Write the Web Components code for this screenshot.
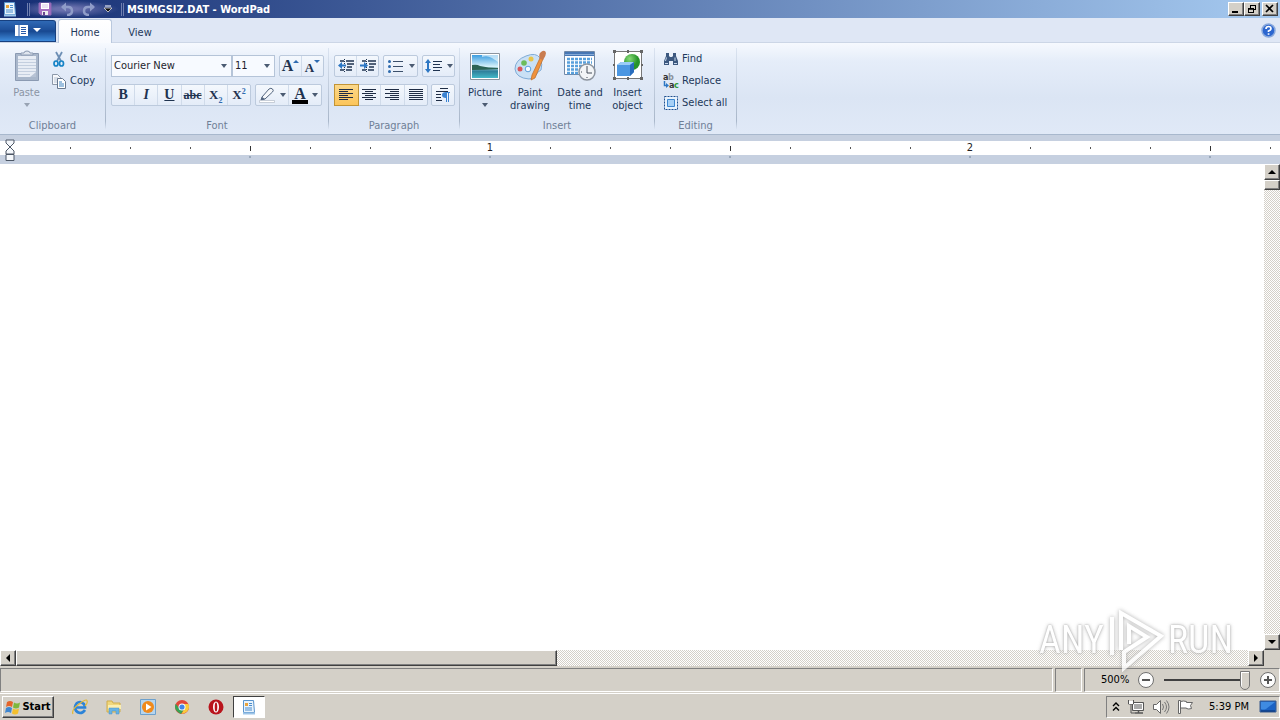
<!DOCTYPE html>
<html lang="en">
<head>
<meta charset="utf-8">
<title>MSIMGSIZ.DAT - WordPad</title>
<style>
html, body { height: 100%; margin: 0; }
body { font: 11px/14px "DejaVu Sans Condensed", "Noto Sans", sans-serif; color: #1e395b; background: #d4d0c8; overflow: hidden; }
</style>
</head>
<body>
<wp-app></wp-app>
<script>
const A = 'fill="none" stroke-linecap="round"';
const ICONS = {
  doc: [16, 16, `<path d="M2.500 1.500h10l1 12h-11z" fill="#e8f3fc" stroke="#5a94cc"/><path d="M4 4h3v3H4z" fill="#e9a33c"/><path d="M8 4.500h3M8 6.500h3M4 9h7M4 11h7" stroke="#4a8ccc"/><path d="M2 14.500h12" stroke="#9cc4e8" stroke-width="2"/>`],
  save: [14, 14, `<path d="M1 1h12v12H3l-2-2z" fill="#a56fc0" stroke="#8f68b4"/><path d="M3 1h8v6H3z" fill="#fff"/><path d="M4 3h6M4 5h6" stroke="#d8c8e8"/><path d="M4 9h6v4H4z" fill="#eee"/><path d="M5 10h2v3H5z" fill="#6b4590"/>`],
  undo: [14, 14, `<path d="M2 5h6q4 0 4 4t-5 4" fill="none" stroke="#8f9cc8" stroke-width="2.500"/><path d="M1 5l5-4.500v9z" fill="#8f9cc8"/>`],
  redo: [14, 14, `<path d="M12 5H6Q2 5 2 9t5 4" fill="none" stroke="#8f9cc8" stroke-width="2.500"/><path d="M13 5L8 .500v9z" fill="#8f9cc8"/>`],
  qat: [8, 8, `<path d="M1 1h6" stroke="#fff"/><path d="M0 3h8L4 7z" fill="#111" stroke="#ddd" stroke-width=".8"/>`],
  file: [28, 14, `<path d="M1 1h13v11H1z" fill="#fff"/><path d="M5 1v11" stroke="#2a5caa"/><path d="M7 3.500h5M7 5.500h5M7 7.500h5M7 9.500h5" stroke="#2a5caa"/><path d="M19 4h8l-4 4z" fill="#fff"/>`],
  help: [15, 15, `<circle cx="7.500" cy="7.500" r="6.500" fill="#2c66cf" stroke="#8aa9dc" stroke-width="1.500"/><path d="M5 6q0-2.500 2.500-2.500T10 5.700Q10 7 7.500 8v1" fill="none" stroke="#fff" stroke-width="1.700"/><path d="M6.700 10.300h1.700v1.500H6.700z" fill="#fff"/>`],
  min: [12, 10, `<path d="M2 8h6" stroke="#000" stroke-width="2"/>`],
  restore: [12, 10, `<path d="M4 1.500h6M4.500 1v3M9.500 1v5M7 5.500h3M2 5h6M2.500 4v5M7.500 4v5M2 8.500h6" stroke="#000"/><path d="M4 1h6v1H4zM2 4h6v1.500H2z"/>`],
  close: [12, 10, `<path d="M2 1l7 7M9 1L2 8" stroke="#000" stroke-width="1.700"/>`],
  paste: [26, 32, `<path d="M1.500 3.500h23v27h-23z" fill="#a9b7cb" stroke="#8b9ab2"/><path d="M4 6h18v21H4z" fill="#e8edf5"/><path d="M4 9.500h18M4 12.500h18M4 15.500h18M4 18.500h18M4 21.500h18M4 24.500h12" stroke="#c4cfdf"/><path d="M7 5V3h3q0-2 3-2t3 2h3v2z" fill="#dfe5ee" stroke="#8b9ab2"/><path d="M22 22v5h-6z" fill="#b7c3d5"/>`],
  cut: [16, 16, `<path d="M5 1l5 9M11 1L6 10" stroke="#6d8fb5" stroke-width="1.800"/><ellipse cx="5" cy="12.500" rx="2" ry="2.500" ${A} stroke="#1583c6" stroke-width="1.700"/><ellipse cx="10.500" cy="12.500" rx="2" ry="2.500" ${A} stroke="#1583c6" stroke-width="1.700"/>`],
  copy: [16, 16, `<path d="M1.500 1.500h5l3 3v7h-8z" fill="#f6f8fb" stroke="#8c98a9"/><path d="M3 5h4M3 7h4M3 9h4" stroke="#b9c5d5"/><path d="M6.500 5.500h5l3 3v7h-8z" fill="#fff" stroke="#68788e"/><path d="M8 9h3M8 11h5M8 13h5" stroke="#3f83c0"/>`],
  caret: [6, 4, `<path d="M0 0h6L3 4z" fill="#4b5b72"/>`],
  caretoff: [6, 4, `<path d="M0 0h6L3 4z" fill="#98a3b3"/>`],
  up: [6, 14, `<path d="M0 4l3-3 3 3z" fill="#2f6bb0"/>`],
  down: [6, 14, `<path d="M0 1h6L3 4z" fill="#2f6bb0"/>`],
  pen: [18, 18, `<path d="M4 11l7-8q2-1.500 3.500 0t0 3L7 13l-4 1z" fill="#f5f7fa" stroke="#52647e"/><path d="M4 11l3 2-4 1z" fill="#52647e"/><path d="M1.500 14.500h15v2h-15z" fill="#fff" stroke="#b5bdc8" stroke-width=".7"/>`],
  outdent: [18, 16, `<path d="M3 3h4M9 3h8M10 6h7M10 9h5M3 12h4M9 12h6" stroke="#1f3350" stroke-width="1.500"/><path d="M7.500 1v14" stroke="#1f3350" stroke-dasharray="1 1"/><path d="M1 7.500l4-3.500v2.500h4v2H5V11z" fill="#2d77c4"/>`],
  indent: [18, 16, `<path d="M3 3h4M9 3h8M10 6h7M10 9h5M3 12h4M9 12h6" stroke="#1f3350" stroke-width="1.500"/><path d="M7.500 1v14" stroke="#1f3350" stroke-dasharray="1 1"/><path d="M9 7.500L5 4v2.500H1v2h4V11z" fill="#2d77c4"/>`],
  bullets: [18, 16, `<path d="M6 3.500h10M6 8.500h10M6 13.500h10" stroke="#3b4f6b"/><circle cx="2.500" cy="3.500" r="1.500" fill="#2d6aad"/><circle cx="2.500" cy="8.500" r="1.500" fill="#2d6aad"/><circle cx="2.500" cy="13.500" r="1.500" fill="#2d6aad"/>`],
  spacing: [18, 16, `<path d="M8 3.500h9M8 6.500h7M8 9.500h9M8 12.500h7" stroke="#1f3350" stroke-width="1.200"/><path d="M0 5l3-4 3 4H4v6h2l-3 4-3-4h2V5z" fill="#2d77c4"/>`],
  left: [16, 14, `<path d="M1 1.500h14M1 3.500h9M1 5.500h14M1 7.500h9M1 9.500h14M1 11.500h9" stroke="#1f2d45"/>`],
  center: [16, 14, `<path d="M1 1.500h14M4 3.500h8M1 5.500h14M4 7.500h8M1 9.500h14M4 11.500h8" stroke="#1f2d45"/>`],
  right: [16, 14, `<path d="M1 1.500h14M6 3.500h9M1 5.500h14M6 7.500h9M1 9.500h14M6 11.500h9" stroke="#1f2d45"/>`],
  justify: [16, 14, `<path d="M1 1.500h14M1 3.500h14M1 5.500h14M1 7.500h14M1 9.500h14M1 11.500h14" stroke="#1f2d45"/>`],
  para: [16, 16, `<path d="M5 1.500h8M1 4.500h12M1 7.500h5M1 10.500h5M1 13.500h6" stroke="#1f2d45"/><path d="M11 5h4v1h-1v9h-1V6h-1v9h-1v-4Q7 11 7 8t4-3z" fill="#3b83d2"/>`],
  picture: [32, 32, `<defs><linearGradient id="s" x2="0" y2="1"><stop offset="0" stop-color="#3c9de0"/><stop offset=".5" stop-color="#d5f1fa"/><stop offset=".7" stop-color="#2f7f9a"/><stop offset="1" stop-color="#43b8c8"/></linearGradient></defs><path d="M1.500 3.500h29v26h-29z" fill="#fff" stroke="#8b949f"/><path d="M3 5h26v23H3z" fill="url(#s)"/><path d="M3 15q5-1 8 1 8 2 18 2v1q-14 1-26 1z" fill="#2b6456"/><path d="M13 7q5-2 10 1t6 4V5H13z" fill="#e8f7fd" opacity=".7"/>`],
  paint: [32, 32, `<path d="M12 6Q22 2 26 8q3 7 1 12-4 2-5 5-2 4-7 4Q2 28 1 19 1 10 12 6z" fill="#c9e0f5" stroke="#7fabd6"/><circle cx="10" cy="13" r="2.800" fill="#6cbc5a"/><circle cx="17" cy="9" r="2.500" fill="#e9c548"/><circle cx="6" cy="19" r="2.500" fill="#d9575c"/><circle cx="14" cy="19" r="2.800" fill="#f7fbff" stroke="#5c9fdc"/><path d="M26 8l3 1-8 19-4 2 1-5z" fill="#f0923c" stroke="#b96a2a" stroke-width=".7"/><path d="M26 9q-2-5 1-7 4-3 5 1 0 3-3 7z" fill="#c97c50"/>`],
  date: [32, 32, `<path d="M.500 1.500h30v23H.500z" fill="#fff" stroke="#7189a8"/><path d="M1 2h29v4H1z" fill="#4777b4"/><path d="M1 4.500h29" stroke="#86aad6"/><path d="M3 9h25M3 12.500h25M3 16h25M3 19.500h15M3 23h13" stroke="#58a0dc" stroke-width="2.500" stroke-dasharray="3 1"/><circle cx="23" cy="22" r="8" fill="#f3f5f7" stroke="#8c949e" stroke-width="1.500"/><path d="M23 16v7h5" fill="none" stroke="#444c58"/><path d="M23 28v-1M17 22h1" stroke="#444c58"/>`],
  object: [32, 32, `<path d="M2.500 1.500h27v27h-27z" fill="#fff" stroke="#777"/><defs><radialGradient id="g" cx=".35" cy=".3"><stop offset="0" stop-color="#8bdc7a"/><stop offset="1" stop-color="#26942a"/></radialGradient></defs><circle cx="20" cy="12" r="8" fill="url(#g)"/><path d="M5 15l4-3h13v10l-4 4H5z" fill="#4c97e2"/><path d="M5 15l4-3h13l-4 3z" fill="#9accf7"/><path d="M18 15l4-3v10l-4 4z" fill="#2a6dbd"/><path d="M1 0h3v3H1zM28 0h3v3h-3zM1 27h3v3H1zM28 27h3v3h-3zM15 0h2v3h-2zM15 27h2v3h-2zM1 14h2v2H1zM29 14h2v2h-2z" fill="#666"/>`],
  find: [16, 16, `<path d="M3 2h3v3l1 1h2l1-1V2h3v3l2 5v4h-5v-4H6v4H1v-4l2-5z" fill="#3c587f"/><path d="M3.500 6.500L2.500 10M12 6.500v3.500M2 12.500h3M11 12.500h3" stroke="#c7d7ec"/>`],
  replace: [16, 16, `<path d="M1.500 8v4.500H4" fill="none" stroke="#2d77c4" stroke-width="1.500"/><path d="M3 10l3 2.500L3 15z" fill="#2d77c4"/><text x="0" y="7" font-size="9" font-weight="700" fill="#333">a</text><text x="5" y="7" font-size="9" font-weight="700" fill="#8a929c">b</text><text x="6" y="15" font-size="9" font-weight="700" fill="#333">a</text><text x="11" y="15" font-size="9" font-weight="700" fill="#2e9a3b">c</text>`],
  selall: [16, 16, `<path d="M1.500 1.500h13v13h-13z" fill="#e9f3fd" stroke="#1f4f8f" stroke-dasharray="2 1"/><path d="M4.500 4.500h7v7h-7z" fill="#a7d0f6" stroke="#3d86cf"/>`],
  indentmark: [11, 23, `<path d="M1 1h8v3L5 8 1 4zM5 8l4 4v3H1v-3zM1 15.500h8v6H1z" fill="#f5f8fc" stroke="#4c5766"/>`],
  aup: [8, 8, `<path d="M0 6l4-4 4 4z"/>`], adown: [8, 8, `<path d="M0 2h8L4 6z"/>`],
  aleft: [8, 8, `<path d="M6 0v8L2 4z"/>`], aright: [8, 8, `<path d="M2 0v8l4-4z"/>`],
  minus: [18, 18, `<circle cx="9" cy="9" r="7.500" fill="#fcfcfc" stroke="#6f6f6f"/><path d="M5 9h8" stroke="#555" stroke-width="2"/>`],
  plus: [18, 18, `<circle cx="9" cy="9" r="7.500" fill="#fcfcfc" stroke="#6f6f6f"/><path d="M5 9h8M9 5v8" stroke="#555" stroke-width="2"/>`],
  flag: [16, 16, `<path d="M2 3q3-2 6 0l-1 5q-3-2-6 0z" fill="#e5642a"/><path d="M9 3.500q3 2 6 0l-1 5q-3 2-6 0z" fill="#7eb83c"/><path d="M1 9q3-2 6 0l-1 5q-3-2-6 0z" fill="#3f86d0"/><path d="M8 9.500q3 2 6 0l-1 5q-3 2-6 0z" fill="#f4bf2c"/>`],
  ie: [16, 16, `<path d="M13 11q-2 3-5 3-5-1-5-6 1-5 5-5 5 1 5 5.500H4" fill="none" stroke="#2b83d8" stroke-width="2.700"/><path d="M1 15Q-1 11 7 5t8-3q1 2-2 5" fill="none" stroke="#e3b938" stroke-width="1.200"/>`],
  folder: [16, 16, `<path d="M1 2h5l1 2h7v9H1z" fill="#f0d77c" stroke="#d0ad4c"/><path d="M2 6h13v4H2z" fill="#fbeeb0"/><path d="M3 15V9h10v6h-3v-3H6v3z" fill="#67b3e4" stroke="#4a93c8" stroke-width=".5"/>`],
  media: [16, 16, `<path d="M.500.500h15v15H.500z" fill="#b6d5ee" stroke="#6da0cc"/><circle cx="8" cy="8" r="6" fill="#f08a1c"/><path d="M6 4.500v7L11.500 8z" fill="#fff"/>`],
  chrome: [16, 16, `<circle cx="8" cy="8" r="7" fill="#e2473a"/><path d="M1.700 4.700Q-1 11 7 15l4-6-6 0z" fill="#37a355"/><path d="M14.500 5Q17 13 7.500 15L11 8.500 10 5z" fill="#f9cb3c"/><circle cx="8" cy="8" r="3.500" fill="#fff"/><circle cx="8" cy="8" r="2.600" fill="#4285e8"/>`],
  opera: [16, 16, `<circle cx="8" cy="8" r="7.500" fill="#b9141c"/><ellipse cx="8" cy="8" rx="3" ry="5.500" fill="#fff"/><ellipse cx="8" cy="8" rx="1.300" ry="4.500" fill="#b9141c"/>`],
  chev: [8, 12, `<path d="M1 5l3-3 3 3M1 9.500l3-3 3 3" fill="none" stroke="#000" stroke-width="1.400"/>`],
  net: [18, 16, `<path d="M5.500 3.500h11v8h-11z" fill="#aaa" stroke="#555"/><path d="M6.500 4.500h9v6h-9z" fill="none" stroke="#fff"/><path d="M8 14h8M11.500 12v2" stroke="#555" stroke-width="1.500"/><path d="M1.500 1v4h5V1M4 5v9h4" fill="none" stroke="#555"/><path d="M2 2h4v3H2z" fill="#fff"/>`],
  vol: [18, 16, `<path d="M1.500 5.500h3l4-4v13l-4-4h-3z" fill="#fff" stroke="#666"/><path d="M10.500 5q2 3 0 6M12.500 3q4 5 0 10M14.500 1.500q5 6.500 0 13" fill="none" stroke="#777"/>`],
  tflag: [18, 16, `<path d="M1.500 1.500h2v13h-2z" fill="#fff" stroke="#666"/><path d="M3.500 2.500q3-1 6 0v1h6l-2 3 1 3q-3 1-5 0V9h-6z" fill="#fff" stroke="#666"/>`],
  desk: [18, 14, `<path d="M1 1h16v11H1z" fill="#1b62c4" stroke="#3a5b8c"/><path d="M2 2h14L7 9q-3 1-5 0z" fill="#3f8be2"/><path d="M2 11h14" stroke="#0b2f6b"/>`]
};
const define = (tag, css, html, setup) => customElements.define(tag, class extends HTMLElement {
  connectedCallback() {
    if (this.shadowRoot) return;
    const root = this.attachShadow({ mode: 'open' });
    root.innerHTML = `<style>*{box-sizing:border-box}${css}</style>` + (typeof html === 'function' ? html(this) : html);
    if (setup) setup(this, root);
  }
});
const bevel = 'background:#d4d0c8;border:1px solid;border-color:#fff #404040 #404040 #fff;box-shadow:inset -1px -1px #808080;';
const attr = (el, n, d = '') => el.getAttribute(n) ?? d;

define('wp-icon', ':host{display:block;flex:none} svg{display:block} text{font-family:"DejaVu Sans Condensed",sans-serif}', el => {
  const [w, h, body] = ICONS[attr(el, 'name')];
  return `<svg width="${w}" height="${h}" viewBox="0 0 ${w} ${h}" aria-hidden="true">${body}</svg>`;
});

define('wp-classic-button', `:host{display:flex;flex:none;width:16px;height:16px}
  button{${bevel}flex:1;display:flex;align-items:center;justify-content:center;padding:0;font:inherit;color:#000;gap:1px;min-width:0}
  :host([pressed]) button{background:#fff;border-color:#404040 #fff #fff #404040;box-shadow:none}`,
  el => `<button type="button" aria-label="${attr(el, 'label')}"><slot></slot></button>`);

define('wp-title-bar', `:host{display:flex;height:18px;align-items:center;background:linear-gradient(90deg,#142d73,#a6caf0);color:#fff;padding:0 2px;}
  .quick{display:flex;align-items:center;gap:8px;height:18px;padding:0 9px 0 8px;
    background:radial-gradient(ellipse at 40% 50%,#6970ad 15%,#6970ad00 68%)}
  .bar{width:3px;height:13px;border:solid #6f7fb0;border-width:0 1px;margin-left:9px} .bar.end{margin:0 3px 0 0}
  .quick button{all:unset;display:flex}
  h1{font:inherit;font-weight:700;line-height:16px;padding-top:2px;margin:0;flex:1;white-space:nowrap}
  .window{display:flex} wp-classic-button{width:16px;height:14px} wp-classic-button:last-child{margin-left:2px}`,
  `<wp-icon name="doc"></wp-icon><span class="bar"></span>
  <div class="quick"><button aria-label="Save"><wp-icon name="save"></wp-icon></button><button aria-label="Undo"><wp-icon name="undo"></wp-icon></button><button aria-label="Redo"><wp-icon name="redo"></wp-icon></button><button aria-label="Customize"><wp-icon name="qat"></wp-icon></button></div><span class="bar end"></span>
  <h1>MSIMGSIZ.DAT - WordPad</h1>
  <div class="window"><wp-classic-button label="Minimize"><wp-icon name="min"></wp-icon></wp-classic-button><wp-classic-button label="Restore"><wp-icon name="restore"></wp-icon></wp-classic-button><wp-classic-button label="Close"><wp-icon name="close"></wp-icon></wp-classic-button></div>`);

define('wp-tabs', `:host{display:flex;height:25px;background:#dfe7f5;align-items:stretch;border-bottom:1px solid #ccd6e6;padding-right:4px}
  button{font:inherit;color:inherit;border:0;background:none;padding:0;display:flex;align-items:center;justify-content:center}
  .file{width:56px;margin:2px 2px 0 0;height:22px;border:1px solid #17407f;border-left:0;border-radius:0 3px 0 0;background:linear-gradient(#2f69b5,#1d4f99 45%,#17478f 50%,#3f8bdb)}
  .tab{width:56px;height:25px;padding-top:4px}
  .on{width:54px;margin-top:1px;padding-top:1px;background:linear-gradient(#fff,#f8fafe);border:1px solid #b9c8de;border-bottom:0;border-radius:3px 3px 0 0}
  .help{margin:0 0 0 auto}`,
  `<button class="file" aria-label="WordPad menu"><wp-icon name="file"></wp-icon></button><button class="tab on">Home</button><button class="tab">View</button><button class="help" aria-label="Help"><wp-icon name="help"></wp-icon></button>`);

define('wp-group', `:host{display:flex;flex:none;flex-direction:column;border-right:1px solid;border-image:linear-gradient(#dbe4f1,#a9b7ca 85%,transparent 95%) 1;}
  .body{flex:1;display:flex;padding:0 5px} .name{height:14px;text-align:center;color:#6f7f96}`,
  el => `<div class="body"><slot></slot></div><div class="name">${attr(el, 'label')}</div>`);

define('wp-big', `:host{display:flex;flex:none}
  button{all:unset;width:100%;display:flex;flex-direction:column;align-items:center;text-align:center;line-height:13px}
  .pic{height:36px;display:flex;align-items:center;margin-bottom:2px} .caret{margin-top:4px} :host([disabled]) button{color:#8b95a5}`,
  el => `<button type="button"><span class="pic"><wp-icon name="${attr(el, 'icon')}"></wp-icon></span><slot></slot>${el.hasAttribute('caret') ? `<wp-icon class="caret" name="${el.hasAttribute('disabled') ? 'caretoff' : 'caret'}"></wp-icon>` : ''}</button>`);

define('wp-row', `:host{display:flex;height:22px} button{all:unset;display:flex;align-items:center;gap:3px;white-space:nowrap}`,
  el => `<button type="button"><wp-icon name="${attr(el, 'icon')}"></wp-icon><slot></slot></button>`);

define('wp-box', `:host{display:flex;flex:none;height:22px;border:1px solid #bccadd;border-radius:2px;background:linear-gradient(#f4f8fd,#e4ecf8)}`, '<slot></slot>');

define('wp-tool', `:host{display:flex;flex:1}
  :host(:not(:last-child)){border-right:1px solid #d0dbea}
  button{all:unset;flex:1;display:flex;align-items:center;justify-content:center;gap:4px;color:#1f3350;font:bold 14px/18px "Liberation Serif",serif;white-space:nowrap}
  :host([on]){margin:-1px;border:1px solid #c29436!important;background:linear-gradient(#fbd88b,#fcc55a)}`,
  el => `<button type="button" aria-label="${attr(el, 'label')}"><slot></slot>${attr(el, 'icon') ? `<wp-icon name="${attr(el, 'icon')}"></wp-icon>` : ''}${el.hasAttribute('caret') ? '<wp-icon name="caret"></wp-icon>' : ''}</button>`);

define('wp-select', `:host{display:grid;align-items:center;flex:none;height:22px;border:1px solid #b5c4d8;background:#f7faff}
  select,wp-icon{grid-area:1/1} select{appearance:none;border:0;margin:0;padding:0 2px;width:100%;height:20px;background:none;font:inherit;color:#1e1e2e}
  wp-icon{justify-self:end;margin-right:4px;pointer-events:none}`,
  el => `<select aria-label="${attr(el, 'label')}"><option>${attr(el, 'value')}</option></select><wp-icon name="caret"></wp-icon>`);

define('wp-ribbon', `:host{display:flex;height:92px;padding:5px 0 1px;border-bottom:1px solid #a8b8cd;background:linear-gradient(#f6f9fe,#e5edf9 20%,#dbe5f4 60%,#e0e9f7)}
  .clip{width:106px}.font{width:223px}.par{width:131px}.ins{width:195px}.edit{width:82px}
  .col{display:flex;flex-direction:column} .lines{display:flex;flex-direction:column;gap:7px;padding-top:7px} .line{display:flex;gap:4px}
  .paste{width:43px}.side{padding-left:3px}
  .fam{width:121px}.size{width:43px;margin-left:-4px}.grow{width:45px}.style{width:140px}.color{width:67px}
  .dent{width:45px}.list{width:35px}.sp{width:33px}.al{width:94px}.pm{width:24px;margin-left:-1px}
  .w40{width:40px}.w45{width:45px}.w50{width:50px}.editcol{padding-left:3px}
  i.f{font-style:italic}u{text-decoration:underline}s{font:bold 12px "Liberation Serif",serif} .x{font:bold 13px/14px "Liberation Serif",serif} .x sub,.x sup{font-size:8px;line-height:0;color:#2f6bb0}
  .lg{font-size:16px;margin-right:-4px}.sm{font-size:13px;margin-right:-4px;padding-top:3px}
  .ink{border-bottom:4px solid #000;line-height:13px;padding:0 2px;font-size:16px}`,
  `<wp-group class="clip" label="Clipboard"><wp-big class="paste" icon="paste" caret disabled>Paste</wp-big><div class="col side"><wp-row icon="cut">Cut</wp-row><wp-row icon="copy">Copy</wp-row></div></wp-group>
  <wp-group class="font" label="Font"><div class="lines"><div class="line"><wp-select class="fam" label="Font family" value="Courier New"></wp-select><wp-select class="size" label="Font size" value="11"></wp-select><wp-box class="grow"><wp-tool label="Grow font" icon="up"><span class="lg">A</span></wp-tool><wp-tool label="Shrink font" icon="down"><span class="sm">A</span></wp-tool></wp-box></div>
  <div class="line"><wp-box class="style"><wp-tool label="Bold">B</wp-tool><wp-tool label="Italic"><i class="f">I</i></wp-tool><wp-tool label="Underline"><u>U</u></wp-tool><wp-tool label="Strikethrough"><s>abc</s></wp-tool><wp-tool label="Subscript"><span class="x">X<sub>2</sub></span></wp-tool><wp-tool label="Superscript"><span class="x">X<sup>2</sup></span></wp-tool></wp-box>
  <wp-box class="color"><wp-tool label="Highlight" icon="pen" caret></wp-tool><wp-tool label="Text color" caret><span class="ink">A</span></wp-tool></wp-box></div></div></wp-group>
  <wp-group class="par" label="Paragraph"><div class="lines"><div class="line"><wp-box class="dent"><wp-tool label="Decrease indent" icon="outdent"></wp-tool><wp-tool label="Increase indent" icon="indent"></wp-tool></wp-box><wp-box class="list"><wp-tool label="List" icon="bullets" caret></wp-tool></wp-box><wp-box class="sp"><wp-tool label="Line spacing" icon="spacing" caret></wp-tool></wp-box></div>
  <div class="line"><wp-box class="al"><wp-tool label="Align left" icon="left" on></wp-tool><wp-tool label="Center" icon="center"></wp-tool><wp-tool label="Align right" icon="right"></wp-tool><wp-tool label="Justify" icon="justify"></wp-tool></wp-box><wp-box class="pm"><wp-tool label="Paragraph" icon="para"></wp-tool></wp-box></div></div></wp-group>
  <wp-group class="ins" label="Insert"><wp-big class="w40" icon="picture" caret>Picture</wp-big><wp-big class="w50" icon="paint">Paint<br>drawing</wp-big><wp-big class="w50" icon="date">Date and<br>time</wp-big><wp-big class="w45" icon="object">Insert<br>object</wp-big></wp-group>
  <wp-group class="edit" label="Editing"><div class="col editcol"><wp-row icon="find">Find</wp-row><wp-row icon="replace">Replace</wp-row><wp-row icon="selall">Select all</wp-row></div></wp-group>`);

define('wp-ruler', `:host{display:grid;height:29px;background:#c6d0e0;overflow:hidden}
  .band,.mark{grid-area:1/1} .band{min-width:0;margin-top:6px;display:flex;height:23px;padding-left:40px;background:linear-gradient(#fff 14px,transparent 14px);overflow:hidden}
  .cell{flex:none;width:60px;height:20px;display:flex;flex-direction:column;align-items:center;color:#222;line-height:14px}
  .num{height:15px} .dot{width:1px;height:2px;margin:6px 0 7px;background:#555} .half{width:1px;height:5px;margin:5px 0;background:#333}
  .foot{width:2px;height:2px;background:#9aa8ba} .mark{margin:4px 0 0 5px;z-index:1}`,
  '<div class="band"></div><wp-icon class="mark" name="indentmark"></wp-icon>',
  (el, root) => {
    const draw = () => {
      let cells = '';
      const count = Math.ceil((innerWidth - 40) / 60);
      for (let i = 1; i <= count; i++) cells += `<div class="cell">${i % 8 === 0 ? `<span class="num">${i / 8}</span><i class="foot"></i>` : i % 4 === 0 ? '<i class="half"></i><i class="foot"></i>' : '<i class="dot"></i>'}</div>`;
      root.querySelector('.band').innerHTML = cells;
    };
    draw();
    addEventListener('resize', draw);
  });

define('wp-scroll', `:host{display:flex;background:repeating-conic-gradient(#fff 0 25%,#d4d0c8 0 50%) 0 0/2px 2px}
  :host([dir=v]){flex-direction:column;width:16px} :host([dir=h]){height:16px}
  .thumb{${bevel}} :host([dir=v]) .thumb{flex:none;height:10px} :host([dir=v]) .rest{flex:1}
  :host([dir=h]) .thumb{flex:540} :host([dir=h]) .rest{flex:692}`,
  el => { const v = attr(el, 'dir') === 'v'; return `<wp-classic-button label="${v ? 'Up' : 'Left'}"><wp-icon name="${v ? 'aup' : 'aleft'}"></wp-icon></wp-classic-button><div class="thumb"></div><div class="rest"></div><wp-classic-button label="${v ? 'Down' : 'Right'}"><wp-icon name="${v ? 'adown' : 'aright'}"></wp-icon></wp-classic-button>`; });

define('wp-document', `:host{display:grid;grid-template:minmax(0,1fr) 16px/minmax(0,1fr) 16px;position:relative;background:#d4d0c8}
  textarea{border:0;margin:0;padding:4px 10px;resize:none;outline:0;width:100%;height:100%;background:#fff;font:73px "Liberation Mono",monospace}`,
  `<textarea aria-label="Document"></textarea><wp-scroll dir="v"></wp-scroll><wp-scroll dir="h"></wp-scroll>`);

define('wp-status', `:host{display:flex;gap:2px;height:27px;padding:2px 0 1px;background:#d4d0c8;color:#000}
  div{border:1px solid;border-color:#808080 #fff #fff #808080} .main{flex:1}.mid{width:27px}
  .zoom{width:196px;display:flex;align-items:center;padding:0 2px 0 16px;gap:6px}
  button{all:unset;display:flex} output{width:30px}
  input{appearance:none;flex:1;min-width:0;margin:0 3px;height:20px;background:linear-gradient(#404040,#404040) center/100% 2px no-repeat}
  input::-webkit-slider-thumb{appearance:none;width:10px;height:19px;background:#d4d0c8;border:1px solid #777;border-radius:0 0 5px 5px;box-shadow:inset 1px 1px #fff}`,
  `<div class="main"></div><div class="mid"></div><div class="zoom"><output>500%</output><button aria-label="Zoom out"><wp-icon name="minus"></wp-icon></button><input type="range" aria-label="Zoom" min="10" max="500" value="500"><button aria-label="Zoom in"><wp-icon name="plus"></wp-icon></button></div>`);

define('wp-taskbar', `:host{display:flex;height:27px;padding:2px 0 2px 2px;background:#d4d0c8;color:#000;border-top:1px solid #fff;align-items:center}
  .start{width:52px;height:22px;font-weight:700}
  .apps{display:flex;align-items:center;margin-left:9px;flex:1} .apps button{all:unset;width:34px;display:flex;justify-content:center}
  .active{width:32px;height:22px}
  .tray{display:flex;align-items:center;height:22px;width:174px;border:1px solid;border-color:#808080 #fff #fff #808080;padding:0 2px 0 5px;gap:7px}
  time{margin:0 2px 0 6px;white-space:nowrap;flex:1;text-align:center}`,
  `<wp-classic-button class="start" label="Start"><wp-icon name="flag"></wp-icon>Start</wp-classic-button>
  <nav class="apps"><button aria-label="Internet Explorer"><wp-icon name="ie"></wp-icon></button><button aria-label="Explorer"><wp-icon name="folder"></wp-icon></button><button aria-label="Media Player"><wp-icon name="media"></wp-icon></button><button aria-label="Chrome"><wp-icon name="chrome"></wp-icon></button><button aria-label="Opera"><wp-icon name="opera"></wp-icon></button><wp-classic-button class="active" label="WordPad" pressed><wp-icon name="doc"></wp-icon></wp-classic-button></nav>
  <div class="tray"><wp-icon name="chev"></wp-icon><wp-icon name="net"></wp-icon><wp-icon name="vol"></wp-icon><wp-icon name="tflag"></wp-icon><time>5:39 PM</time><wp-icon name="desk"></wp-icon></div>`);

define('wp-watermark', `:host{position:absolute;right:47px;bottom:48px;display:flex;align-items:center;gap:4px;pointer-events:none;color:#fff;opacity:.8;
  font:38px/60px "Roboto Condensed","Roboto",sans-serif;text-shadow:0 0 2px #888,0 0 4px #bbb} svg{display:block;filter:drop-shadow(0 0 2px #999)}`,
  `<span>ANY</span><svg width="56" height="64" viewBox="0 0 56 64" fill="none" stroke="#fff" stroke-width="4"><path d="M4 9v38M13 42V5l40 23-37 32V44l23-15-18-11v18"/></svg><span>RUN</span>`);

define('wp-app', `:host{display:grid;grid-template-columns:minmax(0,1fr);grid-template-rows:auto auto auto auto minmax(0,1fr) auto auto;height:100vh;position:relative;overflow:hidden}`,
  `<wp-title-bar></wp-title-bar><wp-tabs></wp-tabs><wp-ribbon></wp-ribbon><wp-ruler></wp-ruler><wp-document></wp-document><wp-status></wp-status><wp-taskbar></wp-taskbar><wp-watermark></wp-watermark>`);
</script>
</body>
</html>
